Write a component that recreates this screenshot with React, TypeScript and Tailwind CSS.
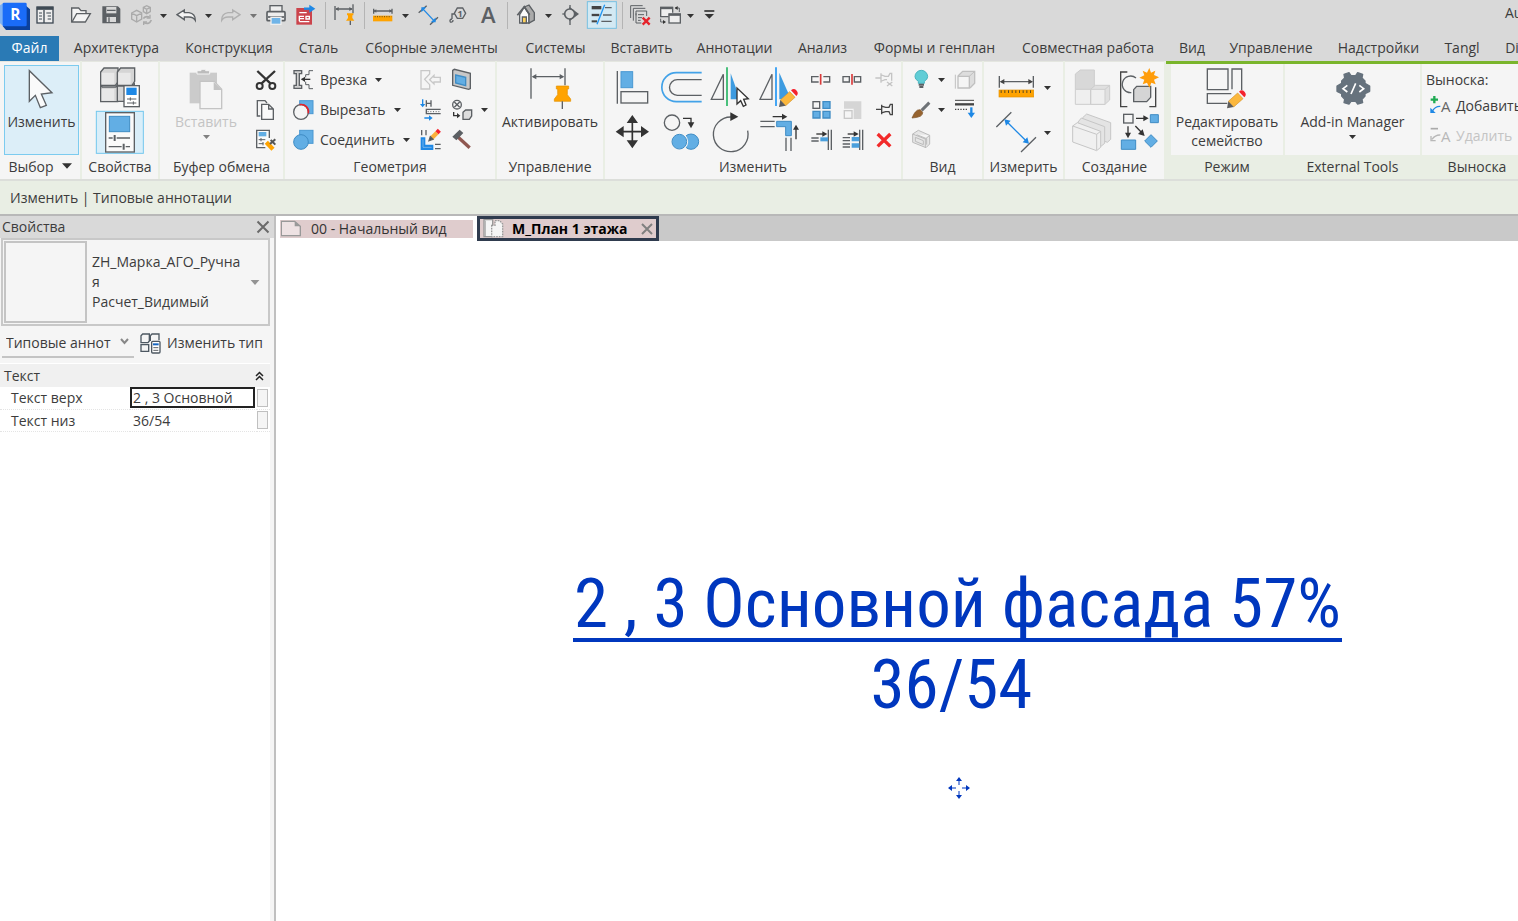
import type { ReactNode } from 'react';

const tabs = [
  { name: 'Архитектура', width: 'w-[111px]' },
  { name: 'Конструкция', width: 'w-[114px]' },
  { name: 'Сталь', width: 'w-[65px]' },
  { name: 'Сборные элементы', width: 'w-[161px]' },
  { name: 'Системы', width: 'w-[87px]' },
  { name: 'Вставить', width: 'w-[85px]' },
  { name: 'Аннотации', width: 'w-[101px]' },
  { name: 'Анализ', width: 'w-[75px]' },
  { name: 'Формы и генплан', width: 'w-[149px]' },
  { name: 'Совместная работа', width: 'w-[158px]' },
  { name: 'Вид', width: 'w-[50px]' },
  { name: 'Управление', width: 'w-[108px]' },
  { name: 'Надстройки', width: 'w-[107px]' },
  { name: 'Tangl', width: 'w-[60px]' },
  { name: 'Di', width: 'w-[40px]' },
];

type ArtProps = { x: number; y: number; w: number; h: number; children?: ReactNode };

// Icons are drawn on a grid three times finer than the screen.
function Art({ x, y, w, h, children }: ArtProps) {
  return (
    <svg
      width={w / 3}
      height={h / 3}
      viewBox={`${x} ${y} ${w} ${h}`}
      fill="none"
      stroke="#5c6064"
      strokeWidth={4}
      className="block shrink-0"
      aria-hidden="true"
    >
      {children}
    </svg>
  );
}

function Tool({ label, ...art }: ArtProps & { label: string }) {
  return (
    <button type="button" aria-label={label} className="block shrink-0">
      <Art {...art} />
    </button>
  );
}

function Caret({ className = '' }: { className?: string }) {
  return (
    <svg width="7" height="4" viewBox="0 0 7 4" className={`shrink-0 fill-[#333] ${className}`} aria-hidden="true">
      <path d="M0 0H7L3.5 4Z" />
    </svg>
  );
}

function More({ label, size, faded }: { label: string; size: string; faded?: boolean }) {
  return (
    <button type="button" aria-label={label} className={`flex shrink-0 items-center justify-center ${size}`}>
      <Caret className={faded ? 'opacity-60' : ''} />
    </button>
  );
}

function Divider({ size }: { size: string }) {
  return (
    <div className={`flex h-[31px] shrink-0 items-center justify-center ${size}`}>
      <div className="h-[27px] w-px bg-[#b4b4b4]" />
    </div>
  );
}

function Group({ title, size, context, children }: { title: ReactNode; size: string; context?: boolean; children: ReactNode }) {
  return (
    <section className={`flex flex-col border-r-2 border-[#e9eee4] bg-[#f5f5f5] ${size}`}>
      <div className={context ? 'pt-px' : 'border-t border-t-[#e4e6e0] pt-[3px]'}>
        <div className="flex h-[90px] w-full">{children}</div>
      </div>
      <h2 className={`flex h-6 items-center justify-center gap-2 pb-0.5 whitespace-nowrap ${context ? 'bg-[#e9eee4]' : ''}`}>{title}</h2>
    </section>
  );
}

// The tip of the pencil sits at the given point.
function Pencil({ x, y }: { x: number; y: number }) {
  return (
    <g transform={`translate(${x} ${y})`} stroke="none">
      <path d="M4 -21L32 -46L48 -29L20 -4Z" fill="#fbb73c" stroke="#d69227" strokeWidth={2} />
      <path d="M0 0L4 -21L20 -4Z" fill="#5c5c5c" />
      <path d="M36 -50a11 11 0 1 1 16 17z" fill="#f5222d" />
    </g>
  );
}

function QuickAccess() {
  return (
    <div className="flex h-9 items-start overflow-hidden bg-[#d9d9d9]">
      <Tool label="Revit" x={0} y={0} w={90} h={93}>
        <g stroke="none">
          <path d="M0 16L12 8V80L0 70Z" fill="#7fb2f3" />
          <path d="M76 16L90 28V90H18L8 78Z" fill="#0b419c" />
          <rect x={8} y={8} width={72} height={71} rx={4} fill="#1a6cf8" />
          <text x={46} y={59} textAnchor="middle" fontSize={46} fontWeight={700} fill="#fff">R</text>
        </g>
      </Tool>
      <Tool label="Главная" x={90} y={0} w={90} h={93}>
        <rect x={111} y={21} width={48} height={48} fill="#eee" stroke="#3f4a54" />
        <path d="M110 25H160" stroke="#3f4a54" strokeWidth={9} />
        <path d="M132 30V69" stroke="#3f4a54" />
        <path d="M117 39h9M117 48h9M117 57h9M139 39h14M143 48h10M143 57h10" stroke="#3f4a54" strokeWidth={3} />
      </Tool>
      <Tool label="Открыть" x={180} y={0} w={108} h={93}>
        <path d="M215 66V24H236L243 32H258V41" fill="#f4f4f4" />
        <path d="M216 66L230 41H271L256 66Z" fill="#f4f4f4" />
      </Tool>
      <Tool label="Сохранить" x={288} y={0} w={90} h={93}>
        <path d="M309 21H353L359 27V68H309Z" fill="#5c6064" />
        <path d="M319 21H349V40H319Z" fill="#d9d9d9" stroke="none" />
        <path d="M320 51H348V66H320Z" fill="#d9d9d9" stroke="none" />
        <path d="M321 31H347M327 52V66" />
      </Tool>
      <Tool label="Синхронизация" x={378} y={0} w={87} h={93}>
        <g stroke="#aaa">
          <path d="M395 39L410 31L425 39V57L410 66L395 57ZM395 39L410 47L425 39M410 47V66" />
          <path d="M430 22L440 17L451 22V35L440 41L430 35ZM430 22L440 28L451 22M440 28V40" />
          <path d="M430 56Q434 47 448 51M454 60Q448 75 432 68" strokeWidth={5} />
          <path d="M450 44V54H440M431 75V66H441" />
        </g>
      </Tool>
      <More label="Параметры синхронизации" size="h-[31px] w-[16px]" />
      <Tool label="Отменить" x={513} y={0} w={87} h={93}>
        <path d="M531 44L553 30V38H567Q586 41 586 61Q580 51 567 51H553V59Z" fill="#f4f4f4" />
      </Tool>
      <More label="История отмены" size="h-[31px] w-[16px]" />
      <Tool label="Повторить" x={648} y={0} w={90} h={93}>
        <path d="M720 44L698 30V38H684Q665 41 665 61Q671 51 684 51H698V59Z" stroke="#b0b0b0" />
      </Tool>
      <More label="История повтора" size="h-[31px] w-[14px]" faded />
      <Tool label="Печать" x={780} y={0} w={93} h={93}>
        <rect x={810} y={17} width={36} height={18} fill="#eee" />
        <rect x={801} y={35} width={54} height={27} rx={3} fill="#eee" strokeWidth={5} />
        <path d="M804 51H852" strokeWidth={5} />
        <rect x={813} y={52} width={30} height={21} fill="#6fb4e8" stroke="#eee" />
      </Tool>
      <Tool label="Экспорт в PDF" x={873} y={0} w={87} h={93}>
        <rect x={889} y={24} width={47} height={50} fill="#cb444c" stroke="none" />
        <path d="M898 38H920M898 64V49H912M898 56H912M898 65H928M918 49H928V57H918Z" stroke="#fff" />
        <path d="M912 26H934" stroke="#1e88e5" strokeWidth={7} />
        <path d="M928 14L946 26L928 38Z" fill="#1e88e5" stroke="none" />
      </Tool>
      <Divider size="w-[10px]" />
      <Tool label="Активировать размеры" x={990} y={0} w={90} h={93}>
        <path d="M1005 18V60M1059 13V40M1008 27H1056" />
        <path d="M1006 27l10 -6v12zM1058 27l-10 -6v12z" fill="#5c6064" stroke="none" />
        <path d="M1041 40H1060V46H1057V54L1063 62H1038L1044 54V46H1041Z" fill="#ffa300" stroke="none" />
        <path d="M1051 62V75" />
      </Tool>
      <Divider size="w-[9px]" />
      <Tool label="Измерить" x={27} y={0} w={84} h={93}>
        <path d="M41 26V41M96 26V41M42 33H95" />
        <path d="M40 33l9 -5v10zM97 33l-9 -5v10z" fill="#5c6064" stroke="none" />
        <rect x={39} y={47} width={58} height={17} fill="#ffa300" stroke="none" />
        <path d="M44 50H94" stroke="#7c5a17" strokeWidth={4} strokeDasharray="3 4" />
      </Tool>
      <More label="Виды измерений" size="h-[31px] w-[16px]" />
      <Tool label="Параллельный размер" x={159} y={0} w={93} h={93}>
        <path d="M176 38L200 17M210 74L234 52" />
        <path d="M190 28L221 61" stroke="#1e88e5" />
        <path d="M186 24h8l-8 8zM225 65v-8l-8 8z" fill="#1e88e5" stroke="#1e88e5" />
      </Tool>
      <Tool label="Марка по категории" x={252} y={0} w={93} h={93}>
        <path d="M292 24H308L317 40L308 55H292L283 40Z" />
        <path d="M284 42H276V57M276 57q-9 2 -5 9q8 2 8 -6" />
        <text x={300} y={50} textAnchor="middle" fontSize={27} fontWeight={700} fill="#5c6064" stroke="none">1</text>
      </Tool>
      <Tool label="Текст" x={345} y={0} w={84} h={93}>
        <text x={385} y={68} textAnchor="middle" fontSize={66} fontWeight={600} fill="#5c6064" stroke="none">A</text>
      </Tool>
      <Divider size="w-[9px]" />
      <Tool label="3D вид" x={456} y={0} w={84} h={93}>
        <path d="M479 44V69H507V42L493 21Z" fill="#fafafa" />
        <path d="M493 21L507 15L523 38V60L507 69V42Z" fill="#aaa" />
        <path d="M472 46L493 20L509 44" strokeWidth={5} />
        <path d="M487 69V51H499V69Z" fill="#ffd25a" />
      </Tool>
      <More label="Виды 3D" size="h-[31px] w-[17px]" />
      <Tool label="Разрез" x={591} y={0} w={84} h={93}>
        <path d="M630 15V27M630 57V75" />
        <path d="M628 20L657 42L628 64Z" fill="#5c6064" stroke="none" />
        <circle cx={629} cy={42} r={15} fill="#d9d9d9" strokeWidth={5} />
        <path d="M607 42H613" />
      </Tool>
      <Tool label="Тонкие линии" x={675} y={0} w={102} h={93}>
        <rect x={682} y={5} width={87} height={80} fill="#d3e9f3" stroke="#78c0e2" strokeWidth={3} />
        <path d="M695 23H724" stroke="#444" strokeWidth={10} />
        <path d="M695 45H718" stroke="#444" strokeWidth={7} />
        <path d="M695 64H711" stroke="#444" strokeWidth={6} />
        <path d="M735 23H755M729 45H755M724 64H755" />
        <path d="M734 14L711 73" stroke="#2196f3" />
      </Tool>
      <Divider size="w-[7px]" />
      <Tool label="Закрыть неактивные" x={798} y={0} w={87} h={93}>
        <path d="M812 54V17H848M820 62V25H856M828 46V33H860V48M828 40V69H844M834 44H852M834 53H846M834 61H842" strokeWidth={3} />
        <path d="M848 53L869 74M869 53L848 74" stroke="#e5232b" strokeWidth={7} />
      </Tool>
      <Tool label="Переключение окон" x={885} y={0} w={84} h={93}>
        <path d="M926 50H902V22H938V38" fill="#eee" />
        <path d="M901 24H939" strokeWidth={7} />
        <rect x={927} y={42} width={34} height={27} fill="#eee" />
        <path d="M926 44H962" strokeWidth={7} />
        <path d="M945 24H958V36M902 56V66H912" strokeWidth={3} />
        <path d="M953 18l-9 6l9 6zM909 60l9 6l-9 6z" fill="#333" stroke="none" />
      </Tool>
      <More label="Список окон" size="h-[31px] w-[14px]" />
      <Tool label="Настройка панели" x={1011} y={0} w={69} h={93}>
        <path d="M1033 33H1063" stroke="#333" strokeWidth={5} />
        <path d="M1034 42H1062L1048 56Z" fill="#333" stroke="none" />
      </Tool>
      <div className="ml-auto w-[13px] py-[3px] whitespace-nowrap">Au</div>
    </div>
  );
}

function SelectGroup() {
  return (
    <Group title={<>Выбор <Caret className="h-[6px] w-[10px]" /></>} size="w-[82px] shrink-0">
      <button type="button" className="ml-1 flex w-[75px] flex-col items-center border border-[#7ccbef] bg-[#dceef8]">
        <Art x={72} y={18} w={108} h={138}>
          <path d="M88 32V124L106 106L121 143L139 136L124 102L156 98Z" fill="#fafafa" />
        </Art>
        Изменить
      </button>
    </Group>
  );
}

function PropertiesGroup() {
  return (
    <Group title="Свойства" size="w-[78px] shrink-0">
      <div>
        <Tool label="Свойства типа" x={246} y={15} w={228} h={135}>
          <g fill="#d5d5d5">
            <path d="M302 76L307 81H348L353 74V125H302Z" />
            <path d="M352 78H398L403 72V124H352Z" />
            <path d="M302 36L312 24H354V66L346 76H302Z" />
            <path d="M352 36L362 24H404V64L396 76H352Z" />
          </g>
          <path d="M305 38H343V73H305ZM355 38H392V73H355ZM305 87H343V122H305Z" fill="#e8e8e8" stroke="none" />
          <rect x={372} y={77} width={46} height={63} fill="#fff" />
          <rect x={379} y={83} width={31} height={22} fill="#1e88e5" stroke="none" />
          <path d="M381 117H409M381 129H409M391 112V122M400 124V134" strokeWidth={3} />
        </Tool>
        <Tool label="Палитра свойств" x={246} y={150} w={228} h={135}>
          <rect x={289} y={154} width={141} height={126} fill="#d9eef9" stroke="#74c7ee" strokeWidth={3} />
          <rect x={317} y={158} width={86} height={118} fill="#fafafa" />
          <rect x={328} y={169} width={61} height={46} fill="#62aee4" stroke="#3f8cc4" strokeWidth={3} />
          <path d="M326 234H338M350 234H390M326 260H365M377 260H390" />
          <path d="M344 225V243M371 251V269" strokeWidth={6} />
        </Tool>
      </div>
    </Group>
  );
}

function ClipboardGroup() {
  return (
    <Group title="Буфер обмена" size="w-[125px] shrink-0">
      <button type="button" className="flex w-[92px] flex-col items-center text-[#c4c4c4]">
        <Art x={543} y={15} w={147} h={141}>
          <path d="M566 38H648V130H566Z" fill="#cbcbcb" stroke="none" />
          <path d="M588 42H626V32H614V28H600V32H588Z" fill="#bcbcbc" stroke="#f5f5f5" strokeWidth={3} />
          <path d="M597 64H640L662 88V146H597Z" fill="#f5f5f5" stroke="#c4c4c4" />
          <path d="M638 66V90H662Z" fill="#c4c4c4" stroke="none" />
        </Art>
        Вставить
        <Caret className="mt-1 opacity-60" />
      </button>
      <div>
        <Tool label="Вырезать в буфер" x={756} y={15} w={93} h={90}>
          <path d="M772 33L811 70M825 33L785 70" stroke="#333" strokeWidth={7} />
          <circle cx={779} cy={78} r={9} stroke="#333" strokeWidth={6} />
          <circle cx={817} cy={78} r={9} stroke="#333" strokeWidth={6} />
        </Tool>
        <Tool label="Копировать в буфер" x={756} y={105} w={93} h={90}>
          <path d="M781 168H772V122H795L801 129" />
          <path d="M785 133H806L820 147V178H785ZM806 133V147H820" fill="#fafafa" />
        </Tool>
        <Tool label="Копирование свойств" x={756} y={195} w={93} h={90}>
          <path d="M796 263H770V211H808V234" fill="#fafafa" />
          <rect x={776} y={216} width={23} height={13} fill="#62aee4" stroke="none" />
          <path d="M776 239H796M776 251H790M783 234V244M789 246V256" strokeWidth={3} />
          <path d="M799 247L819 268" stroke="#ffa300" strokeWidth={13} />
          <path d="M810 252L826 238M812 240L826 254" stroke="#555" strokeWidth={6} />
        </Tool>
      </div>
    </Group>
  );
}

function GeometryGroup() {
  return (
    <Group title="Геометрия" size="w-[212px] shrink-0">
      <div className="w-[130px]">
        <button type="button" className="flex h-[30px] items-center">
          <Art x={0} y={15} w={105} h={90}>
            <path d="M27 32H50V41H43V76H50V85H27V76H34V41H27Z" fill="#d0d0d0" />
            <path d="M84 32H72V44H62V52M62 65V74H72V86H84" strokeWidth={3} />
            <path d="M50 58H76" stroke="#333" />
            <path d="M48 58l12 -8v16z" fill="#333" stroke="none" />
          </Art>
          <span className="pb-0.5">Врезка</span>
          <Caret className="ml-2" />
        </button>
        <button type="button" className="flex h-[30px] items-center">
          <Art x={0} y={105} w={105} h={90}>
            <rect x={44} y={122} width={40} height={39} fill="#62aee4" stroke="#4a98d2" strokeWidth={3} />
            <circle cx={48} cy={156} r={22} fill="#f5f5f5" />
            <path d="M44 134A22 22 0 0 1 70 160" stroke="#e5232b" strokeWidth={5} />
          </Art>
          <span className="pb-0.5">Вырезать</span>
          <Caret className="ml-2" />
        </button>
        <button type="button" className="flex h-[30px] items-center">
          <Art x={0} y={195} w={105} h={90}>
            <rect x={44} y={211} width={40} height={39} fill="#62aee4" stroke="#4a98d2" strokeWidth={3} />
            <circle cx={48} cy={246} r={22} fill="#62aee4" stroke="#3f8cc4" strokeWidth={3} />
          </Art>
          <span className="pb-0.5">Соединить</span>
          <Caret className="ml-2" />
        </button>
      </div>
      <div>
        <Tool label="Снять врезку" x={390} y={15} w={99} h={90}>
          <path d="M408 32H434V42L419 58L434 74V87H408Z" stroke="#c8c8c8" />
          <path d="M434 59L447 46V52H466V66H447V72Z" stroke="#c8c8c8" />
        </Tool>
        <Tool label="Соединение балок" x={390} y={105} w={99} h={90}>
          <path d="M413 118V134M418 174H434" stroke="#1e88e5" />
          <path d="M405 132H421L413 142ZM432 166V182L443 174Z" fill="#1e88e5" stroke="none" />
          <path d="M424 121V140M438 121V140M424 130H438" />
          <path d="M467 148H424V161H467" />
          <path d="M428 155H466" strokeDasharray="3 5" strokeWidth={3} />
        </Tool>
        <Tool label="Соединение стен" x={390} y={195} w={99} h={90}>
          <path d="M407 232H421V254H445V270H407Z" fill="#1e88e5" stroke="none" />
          <path d="M414 238V262H440" stroke="#9cc9ee" strokeWidth={2} />
          <path d="M410 210V226M423 210V226M450 253H467M450 266H467" />
          <path d="M438 236L456 218" stroke="#fbb03b" strokeWidth={13} />
          <path d="M432 242L436 230L444 238Z" fill="#444" />
          <path d="M456 218L463 211" stroke="#f5222d" strokeWidth={13} />
        </Tool>
      </div>
      <div>
        <Tool label="Разделить грань" x={489} y={15} w={87} h={90}>
          <path d="M503 31L508 28L556 40V86L551 88L503 76Z" fill="#c8c8c8" />
          <path d="M512 45L542 52V77L512 69Z" fill="#62aee4" stroke="#3f8cc4" />
        </Tool>
        <Tool label="Раскраска" x={489} y={105} w={87} h={90}>
          <circle cx={516} cy={134} r={13} />
          <path d="M508 126L524 142M524 126L508 142" />
          <path d="M506 156V167H518" stroke="#333" />
          <path d="M516 159V175L526 167Z" fill="#333" stroke="none" />
          <path d="M534 157L542 150H560V168L553 178H534Z" fill="#ddd" />
        </Tool>
        <Tool label="Снос" x={489} y={195} w={87} h={90}>
          <path d="M518 230L554 263" stroke="#8f5750" strokeWidth={10} />
          <path d="M505 230L524 212L532 219L514 238Z" fill="#5c6064" />
        </Tool>
      </div>
      <div className="flex items-center">
        <More label="Варианты раскраски" size="h-[30px] w-[14px]" />
      </div>
    </Group>
  );
}

function ActivateGroup() {
  return (
    <Group title="Управление" size="w-[108px] shrink-0">
      <button type="button" className="flex w-full flex-col items-center">
        <Art x={717} y={15} w={156} h={141}>
          <path d="M738 25V116M840 25V76M744 50H834" />
          <path d="M740 50l14 -8v16zM838 50l-14 -8v16z" fill="#5c6064" stroke="none" />
          <path d="M814 78H851V87H847V104L857 117V124H808V117L818 104V87H814Z" fill="#ffa300" stroke="#e39100" strokeWidth={2} />
          <path d="M832 124V147" />
        </Art>
        Активировать
      </button>
    </Group>
  );
}

function ModifyGroup() {
  return (
    <Group title="Изменить" size="w-[298px] shrink-0">
      <div>
        <Tool label="Выровнять" x={0} y={15} w={150} h={135}>
          <path d="M37 33V131" />
          <rect x={48} y={35} width={35} height={48} fill="#62aee4" stroke="#4a98d2" strokeWidth={3} />
          <rect x={48} y={95} width={80} height={34} />
        </Tool>
        <Tool label="Перенести" x={0} y={150} w={150} h={135}>
          <path d="M82 180V250M46 215H118" stroke="#333" strokeWidth={5} />
          <path d="M82 165L99 189H65ZM82 265L99 241H65ZM32 215L56 198V232ZM132 215L108 198V232Z" fill="#333" stroke="none" />
        </Tool>
      </div>
      <div>
        <Tool label="Смещение" x={150} y={15} w={156} h={135}>
          <path d="M290 38H214A43 43 0 0 0 214 125H290" stroke="#42a2e8" strokeWidth={5} />
          <path d="M290 59H217A23 23 0 0 0 217 106H290" />
        </Tool>
        <Tool label="Копировать" x={150} y={150} w={156} h={135}>
          <circle cx={201} cy={188} r={23} />
          <path d="M234 175H258V190" stroke="#333" />
          <path d="M248 187H268L258 205Z" fill="#333" stroke="none" />
          <circle cx={258} cy={245} r={23} fill="#62aee4" stroke="#3f8cc4" strokeWidth={3} />
          <circle cx={223} cy={245} r={24} fill="#62aee4" stroke="#f5f5f5" strokeWidth={5} />
          <circle cx={223} cy={245} r={22} stroke="#3f8cc4" strokeWidth={3} />
        </Tool>
      </div>
      <div>
        <Tool label="Отразить по оси" x={306} y={15} w={144} h={135}>
          <path d="M366 22V138" stroke="#27b563" strokeWidth={5} />
          <path d="M355 43V118H319Z" />
          <path d="M377 40L405 118H377Z" fill="#3d9be0" stroke="none" />
          <path d="M396 84V132L407 122L415 139L423 135L416 118L430 116Z" fill="#fff" stroke="#333" />
        </Tool>
        <Tool label="Повернуть" x={306} y={150} w={144} h={135}>
          <path d="M428 212A52 52 0 1 1 378 171" />
          <path d="M376 157L400 170L376 183Z" fill="#333" stroke="none" />
        </Tool>
      </div>
      <div>
        <Tool label="Отразить рисованием" x={450} y={15} w={150} h={135}>
          <path d="M513 22V138" stroke="#2196f3" strokeWidth={5} />
          <path d="M501 43V118H465Z" />
          <path d="M523 38L550 100L530 118H523Z" fill="#3d9be0" stroke="none" />
          <Pencil x={522} y={141} />
        </Tool>
        <Tool label="Обрезать до угла" x={450} y={150} w={150} h={135}>
          <path d="M503 170H534M573 238V206" stroke="#333" />
          <path d="M531 161L547 170L531 179ZM564 209L573 194L582 209Z" fill="#333" stroke="none" />
          <path d="M515 184H559V227H542V200H515Z" fill="#62aee4" stroke="#3f8cc4" strokeWidth={3} />
          <path d="M466 184H509M466 200H509M543 233V273M558 233V273" />
        </Tool>
      </div>
      <div>
        <Tool label="Разделить" x={600} y={15} w={93} h={90}>
          <path d="M641 50H620V66H641M655 50H674V66H655" />
          <path d="M647 42V74" stroke="#d93a3a" strokeWidth={5} />
        </Tool>
        <Tool label="Массив" x={600} y={105} w={93} h={90}>
          <rect x={624} y={125} width={20} height={20} />
          <path d="M654 125H675V145H654ZM624 154H645V174H624ZM654 154H675V174H654Z" fill="#62aee4" stroke="#3f8cc4" />
        </Tool>
        <Tool label="Удлинить элемент" x={600} y={195} w={93} h={90}>
          <path d="M634 222H656" stroke="#333" />
          <path d="M652 214L667 222L652 230Z" fill="#333" stroke="none" />
          <path d="M619 234H641M619 243H641M670 209V270M679 209V270" />
          <rect x={646} y={232} width={23} height={12} fill="#4a9fdc" stroke="none" />
        </Tool>
      </div>
      <div>
        <Tool label="Разделить с зазором" x={693} y={15} w={99} h={90}>
          <path d="M714 50H733V66H714ZM748 50H767V66H748Z" />
          <path d="M741 42V74" stroke="#d93a3a" strokeWidth={5} />
        </Tool>
        <Tool label="Масштаб" x={693} y={105} w={99} h={90}>
          <path d="M717 124H769V177H746V146H717Z" fill="#d5d5d5" stroke="none" />
          <rect x={718} y={152} width={23} height={23} stroke="#c8c8c8" />
        </Tool>
        <Tool label="Удлинить несколько" x={693} y={195} w={99} h={90}>
          <path d="M728 222H750" stroke="#333" />
          <path d="M746 214L761 222L746 230Z" fill="#333" stroke="none" />
          <path d="M713 233H735M713 242H735M713 252H735M713 261H735M764 209V270M773 209V270" />
          <path d="M740 231H763V244H740ZM740 250H763V263H740Z" fill="#4a9fdc" stroke="none" />
        </Tool>
      </div>
      <div>
        <Tool label="Открепить" x={792} y={15} w={93} h={90}>
          <path d="M811 54H828M828 40V68M830 45L840 49H850L855 40H860V62M830 63L840 59H846M846 66L862 78M862 66L846 78" stroke="#c4c4c4" />
        </Tool>
        <Tool label="Прикрепить" x={792} y={105} w={93} h={90}>
          <path d="M813 148H830M830 134V163M832 139L842 142H852L856 133H862V164H856L852 155H842L832 158" stroke="#444" />
        </Tool>
        <Tool label="Удалить" x={792} y={195} w={93} h={90}>
          <path d="M818 222L856 259M856 222L818 259" stroke="#f22a2a" strokeWidth={10} />
        </Tool>
      </div>
    </Group>
  );
}

function ViewGroup() {
  return (
    <Group title="Вид" size="w-[81px] shrink-0">
      <div>
        <Tool label="Скрыть на виде" x={9} y={15} w={96} h={90}>
          <path d="M55 70V64Q45 58 45 50A19 19 0 0 1 83 50Q83 58 73 64V70Z" fill="#60cdd6" stroke="#48b4be" strokeWidth={3} />
          <path d="M56 74H72M58 81H70" strokeWidth={6} />
        </Tool>
        <Tool label="Переопределить графику" x={9} y={105} w={96} h={90}>
          <path d="M36 174Q42 160 46 156Q52 148 61 149L68 157Q70 172 36 174Z" fill="#96632f" stroke="#7a4e22" strokeWidth={2} />
          <path d="M65 151L88 128" stroke="#6e7276" strokeWidth={9} />
        </Tool>
        <Tool label="Рамка выбора" x={9} y={195} w={96} h={90}>
          <path d="M38 222L55 211L89 226V252L78 263L38 247ZM38 222L76 237L89 226M76 237V263M50 224L80 236V254M46 232L70 242V254L46 244Z" fill="#e6e6e6" stroke="#bbb" strokeWidth={3} />
        </Tool>
      </div>
      <div>
        <More label="Варианты скрытия" size="h-[30px] w-[12px]" />
        <More label="Варианты графики" size="h-[30px] w-[12px]" />
      </div>
      <div>
        <Tool label="Вытеснить элементы" x={141} y={15} w={99} h={90}>
          <path d="M174 48L188 34H224V70L210 84" fill="#ddd" stroke="#c0c0c0" />
          <path d="M174 49H208V84H174Z" fill="#f5f5f5" stroke="#c0c0c0" />
          <path d="M166 44V86M208 49L222 36" stroke="#c0c0c0" strokeWidth={3} />
        </Tool>
        <Tool label="Линейная графика" x={141} y={105} w={99} h={90}>
          <path d="M165 121H222" strokeWidth={3} stroke="#444" />
          <path d="M165 133H222" strokeWidth={7} stroke="#444" />
          <path d="M165 148H202" strokeDasharray="4 4" stroke="#444" />
          <path d="M214 142V160" stroke="#1e88e5" strokeWidth={7} />
          <path d="M203 158H225L214 174Z" fill="#1e88e5" stroke="none" />
        </Tool>
      </div>
    </Group>
  );
}

function MeasureGroup() {
  return (
    <Group title="Измерить" size="w-[81px] shrink-0">
      <div>
        <Tool label="Измерить расстояние" x={252} y={15} w={168} h={135}>
          <path d="M298 48V83M400 48V83M304 65H394" />
          <path d="M299 65l14 -8v16zM399 65l-14 -8v16z" fill="#444" stroke="none" />
          <rect x={297} y={90} width={104} height={21} fill="#ffa300" stroke="#e39100" strokeWidth={2} />
          <path d="M302 95H398" stroke="#5c4a20" strokeWidth={8} strokeDasharray="3 8" />
        </Tool>
        <Tool label="Поставить размер" x={252} y={150} w={168} h={135}>
          <path d="M289 201L334 157M363 276L408 232" />
          <path d="M322 187L378 242" stroke="#1e88e5" />
          <path d="M313 178L332 182L318 197ZM387 251L368 247L382 232Z" fill="#1e88e5" stroke="none" />
        </Tool>
      </div>
      <div>
        <More label="Варианты измерения" size="h-[45px] w-[14px]" />
        <More label="Варианты размеров" size="h-[45px] w-[14px]" />
      </div>
    </Group>
  );
}

function CreateGroup() {
  return (
    <Group title="Создание" size="w-[101px] shrink-0">
      <div>
        <Tool label="Создать группу" x={495} y={15} w={150} h={135}>
          <g stroke="#cdcdcd" strokeWidth={3}>
            <path d="M526 42L541 30H583V78L572 88H526Z" fill="#d8d8d8" />
            <path d="M572 88L586 76H629V120L615 133H572Z" fill="#e0e0e0" />
            <path d="M526 88H572V133H526ZM572 88H615V133H572Z" fill="#efefef" />
            <path d="M615 88L629 76" />
          </g>
        </Tool>
        <Tool label="Создать сборку" x={495} y={150} w={150} h={135}>
          <g stroke="#c6c6c6" strokeWidth={3} fill="#e4e4e4">
            <path d="M548 173L560 162L632 188V238L622 247L548 218Z" />
            <path d="M534 186L544 174L614 200V250L604 258L534 230Z" />
            <path d="M518 198L532 188L602 214V262L590 272L518 246Z" fill="#f0f0f0" />
            <path d="M518 198L590 223V270M590 223L602 214" fill="none" />
          </g>
        </Tool>
      </div>
      <div>
        <Tool label="Создать подобное" x={645} y={15} w={144} h={135}>
          <path d="M682 36H662V140H682M748 140H767V82" stroke="#444" />
          <path d="M708 54A25 25 0 1 0 694 98" />
          <path d="M701 89L710 79H752V112L740 125H701Z" fill="#d5d5d5" />
          <path d="M748 24L753 38L766 32L762 45L777 52L762 59L767 73L754 68L748 83L741 68L728 73L733 59L718 53L733 46L728 32L741 38Z" fill="#ff9d0a" stroke="none" />
        </Tool>
        <Tool label="Создать элементы" x={645} y={150} w={144} h={135}>
          <rect x={671} y={163} width={28} height={26} />
          <path d="M708 175H734M684 199V222M706 198L724 217" stroke="#333" />
          <path d="M730 166L746 175L730 184ZM675 218H693L684 235ZM734 228L714 222L728 208Z" fill="#333" stroke="none" />
          <path d="M751 164H775V188H751ZM664 240H707V268H664ZM753 224L772 243L753 262L734 243Z" fill="#62aee4" stroke="#3f8cc4" strokeWidth={3} />
        </Tool>
      </div>
    </Group>
  );
}

function ContextGroups() {
  return (
    <div className="flex flex-1 overflow-hidden border-t-[3px] border-[#7ab52c] bg-[#e9eee4] pl-[5px]">
      <Group title="Режим" size="w-[114px] shrink-0" context>
        <button type="button" className="flex w-full flex-col items-center">
          <Art x={126} y={15} w={150} h={141}>
            <path d="M142 27H204V89H142ZM216 88V27H245V90M202 130H142V101H214" />
            <Pencil x={201} y={145} />
          </Art>
          <span>Редактировать<br />семейство</span>
        </button>
      </Group>
      <Group title="External Tools" size="w-[137px] shrink-0" context>
        <button type="button" className="flex w-full flex-col items-center">
          <Art x={504} y={15} w={150} h={141}>
            <path
              d="M552 43L567 38L573 47H587L593 38L608 43L606 54L615 63V70L629 78V94L615 101V108L606 118L608 128L593 132L587 124H573L567 132L552 128L554 118L545 108V101L531 94V78L545 70V63L554 54Z"
              fill="#66727d"
              stroke="#66727d"
              strokeLinejoin="round"
            />
            <path d="M562 76L549 86L562 96M598 76L611 86L598 96M587 70L573 102" stroke="#fff" strokeWidth={5} />
          </Art>
          Add-in Manager
          <Caret className="mt-1" />
        </button>
      </Group>
      <Group title="Выноска" size="-mr-4 min-w-[96px] flex-1" context>
        <div className="w-[96px] pl-1 whitespace-nowrap">
          <div className="flex h-[30px] items-center pb-0.5">Выноска:</div>
          <button type="button" className="flex h-5 items-center">
            <Art x={798} y={102} w={90} h={66}>
              <path d="M823 108V130M812 119H834" stroke="#1faa53" strokeWidth={7} />
              <path d="M841 139Q826 138 818 152" stroke="#1e88e5" />
              <path d="M811 143V159H827Z" fill="#1e88e5" stroke="none" />
              <text x={857} y={157} textAnchor="middle" fontSize={45} fill="#666" stroke="none">A</text>
            </Art>
            Добавить
          </button>
          <button type="button" className="flex h-10 items-center text-[#c4c4c4]">
            <Art x={798} y={192} w={90} h={66}>
              <path d="M812 206H834" stroke="#aaa" strokeWidth={5} />
              <path d="M841 225Q826 224 816 238M813 228V242H827" stroke="#b8b8b8" />
              <text x={857} y={245} textAnchor="middle" fontSize={45} fill="#b8b8b8" stroke="none">A</text>
            </Art>
            Удалить
          </button>
        </div>
      </Group>
    </div>
  );
}

function PropertiesPanel() {
  return (
    <aside className="flex w-[276px] shrink-0 flex-col border-r-2 border-[#c0c0c0] bg-[#f5f5f5]">
      <header className="flex h-[22px] items-center justify-between bg-[#d9d9d9] pr-1 pb-px pl-[2px]">
        <h2>Свойства</h2>
        <button type="button" aria-label="Закрыть панель">
          <svg width="14" height="14" viewBox="0 0 14 14" stroke="#6a6a6a" strokeWidth="2" aria-hidden="true">
            <path d="M1.5 1.5L12.5 12.5M12.5 1.5L1.5 12.5" />
          </svg>
        </button>
      </header>
      <button type="button" className="mr-1 ml-px flex h-[88px] items-center border-2 border-[#c8c8c8] pl-px text-left">
        <span className="h-[82px] w-[83px] shrink-0 border-2 border-[#c4c4c4]" />
        <span className="ml-[5px] w-[154px] shrink-0 leading-5 break-all">
          ZH_Марка_АГО_Ручная<br />Расчет_Видимый
        </span>
        <Caret className="ml-1 h-[5px] w-[10px] opacity-50" />
      </button>
      <div className="mt-px flex h-8 items-center">
        <div className="relative ml-[2px] w-[132px] border-b-2 border-[#c4c4c4]">
          <select aria-label="Категория" className="h-7 w-full appearance-none pl-1 outline-none">
            <option>Типовые аннот</option>
          </select>
          <svg width="9" height="7" viewBox="0 0 9 7" fill="none" stroke="#888" strokeWidth="2" className="pointer-events-none absolute top-[10px] right-[5px]" aria-hidden="true">
            <path d="M1 1L4.5 5L8 1" />
          </svg>
        </div>
        <button type="button" className="ml-[6px] flex items-center gap-[6px] whitespace-nowrap">
          <Art x={422} y={368} w={63} h={63}>
            <path d="M425 376L430 371H450V392L446 397H425ZM453 376L458 371H479V390M425 403H448V423H425ZM453 376V392" stroke="#4d5862" />
            <rect x={457} y={393} width={25} height={35} rx={3} fill="#fff" stroke="#4d5862" />
            <path d="M461 402H478" stroke="#1565c0" strokeWidth={6} />
            <path d="M462 412H477M462 420H477" strokeWidth={3} />
          </Art>
          <span className="pb-0.5">Изменить тип</span>
        </button>
      </div>
      <div className="mt-1 mr-1 flex-1 bg-white">
        <div className="mt-px flex h-[23px] items-center justify-between bg-[#f0f0f0] pr-[6px] pl-1">
          <h3>Текст</h3>
          <button type="button" aria-label="Свернуть">
            <svg width="9" height="10" viewBox="0 0 9 10" fill="none" stroke="#222" strokeWidth="1.5" aria-hidden="true">
              <path d="M1 5L4.5 1.5L8 5M1 9L4.5 5.5L8 9" />
            </svg>
          </button>
        </div>
        <table className="w-full border-collapse">
          <tbody>
            <tr className="h-[22px] border-b border-dotted border-[#e4e4e4]">
              <th scope="row" className="w-[130px] p-0 pl-[11px] text-left font-normal"><label htmlFor="text-top">Текст верх</label></th>
              <td className="p-0"><input id="text-top" defaultValue="2 , 3 Основной" className="block h-[21px] w-[125px] border-2 border-[#222] bg-white px-px outline-none" /></td>
              <td className="w-[13px] p-0"><button type="button" aria-label="Связать верх" className="block h-[18px] w-[11px] border border-[#c0c0c0] bg-[#f5f5f5]" /></td>
            </tr>
            <tr className="h-[22px] border-b border-dotted border-[#e4e4e4]">
              <th scope="row" className="w-[130px] p-0 pl-[11px] text-left font-normal"><label htmlFor="text-bottom">Текст низ</label></th>
              <td className="p-0"><input id="text-bottom" defaultValue="36/54" className="block h-[21px] w-[125px] px-[3px] outline-none" /></td>
              <td className="w-[13px] p-0"><button type="button" aria-label="Связать низ" className="block h-[18px] w-[11px] border border-[#c0c0c0] bg-[#f5f5f5]" /></td>
            </tr>
          </tbody>
        </table>
      </div>
    </aside>
  );
}

function ViewArea() {
  return (
    <main className="flex min-w-0 flex-1 flex-col bg-white">
      <div className="flex h-[25px] items-center">
        <button type="button" className="ml-1 flex h-[18px] w-[193px] shrink-0 items-center gap-[9px] bg-[#dfcccd] pl-px text-[#333]">
          <Art x={36} y={30} w={63} h={51}>
            <path d="M37 34H77L94 49V77H37Z" fill="#eee2e3" stroke="#999" />
            <path d="M77 34V49H94Z" fill="#999" stroke="none" />
          </Art>
          00 - Начальный вид
        </button>
        <div className="ml-1 flex h-[25px] w-[182px] shrink-0 items-center border-[3px] border-[#2f3b4e] bg-[#dfcccd] pl-[3px] text-black">
          <button type="button" className="flex items-center gap-[7px] font-bold whitespace-nowrap">
            <Art x={638} y={27} w={66} h={57}>
              <path d="M641 29H667V80H641Z" fill="#f5f5f5" stroke="#999" />
              <path d="M664 46H674V32H688L697 42V80H664Z" fill="#f5f5f5" stroke="#999" strokeDasharray="5 3" />
              <path d="M645 32V80" stroke="#888" strokeWidth={2} />
            </Art>
            М_План 1 этажа
          </button>
          <button type="button" aria-label="Закрыть вид" className="ml-auto pr-[3px]">
            <svg width="12" height="12" viewBox="0 0 12 12" stroke="#808080" strokeWidth="2" aria-hidden="true">
              <path d="M1 1L11 11M11 1L1 11" />
            </svg>
          </button>
        </div>
        <div className="h-[25px] flex-1 bg-[#c9c9c9]" />
      </div>
      <div className="relative flex-1">
        <div className="absolute top-[329px] left-[297px] w-[769px] text-center font-['Roboto_Condensed','Roboto',sans-serif] text-[69px] whitespace-nowrap text-[#0037be]">
          <div className="border-b-4 border-[#0037be] leading-[68px]">2 , 3 Основной фасада 57%</div>
          <div className="pr-3 leading-[86px]">36/54</div>
        </div>
        <svg width="22" height="22" viewBox="0 0 22 22" className="absolute top-[536px] left-[672px] fill-[#0037be] stroke-[#0037be]" aria-hidden="true">
          <path d="M11 3V8M11 14V19M3 11H8M14 11H19" />
          <path d="M11 0L14 4H8ZM11 22L14 18H8ZM0 11L4 8V14ZM22 11L18 8V14Z" stroke="none" />
        </svg>
      </div>
    </main>
  );
}

export default function App() {
  return (
    <div className="flex min-h-screen flex-col overflow-hidden bg-[#d9d9d9] font-['Open_Sans','Noto_Sans',sans-serif] text-[14px] leading-[19px] text-[#3c3c3c]">
      <QuickAccess />
      <nav className="flex h-[25px] overflow-hidden">
        <button type="button" className="mr-[2px] w-[59px] shrink-0 bg-[#2a7ab5] pb-0.5 text-white">Файл</button>
        {tabs.map((tab) => (
          <button key={tab.name} type="button" className={`shrink-0 pb-0.5 whitespace-nowrap ${tab.width}`}>
            {tab.name}
          </button>
        ))}
      </nav>
      <div className="flex overflow-hidden border-b-2 border-[#dcdeda] bg-[#f5f5f5]">
        <SelectGroup />
        <PropertiesGroup />
        <ClipboardGroup />
        <GeometryGroup />
        <ActivateGroup />
        <ModifyGroup />
        <ViewGroup />
        <MeasureGroup />
        <CreateGroup />
        <ContextGroups />
      </div>
      <div className="flex h-[35px] items-center border-b-2 border-[#b8b8b8] bg-[#e9eee4] px-[10px]">Изменить | Типовые аннотации</div>
      <div className="flex flex-1">
        <PropertiesPanel />
        <ViewArea />
      </div>
    </div>
  );
}
